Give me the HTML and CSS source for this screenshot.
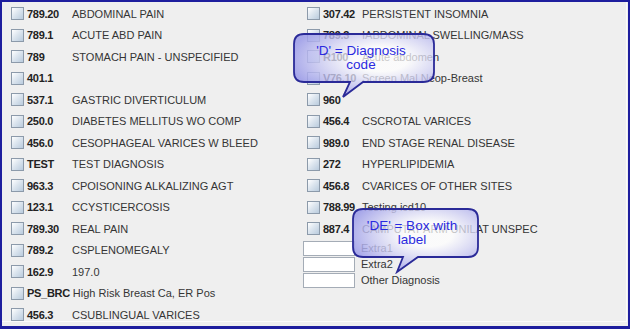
FILE: index.html
```html
<!DOCTYPE html>
<html lang="en">
<head>
    <meta charset="UTF-8" />
    <title>Diagnosis</title>
    <link rel="stylesheet" href="styles.css">
</head>
<body>
<div class="frame">
    <div class="panel">
        <div class="col col-left">
            <div class="row"><span class="cb"></span><span class="code">789.20</span><span class="desc">ABDOMINAL PAIN</span></div>
            <div class="row"><span class="cb"></span><span class="code">789.1</span><span class="desc">ACUTE ABD PAIN</span></div>
            <div class="row"><span class="cb"></span><span class="code">789</span><span class="desc">STOMACH PAIN - UNSPECIFIED</span></div>
            <div class="row"><span class="cb"></span><span class="code">401.1</span><span class="desc"></span></div>
            <div class="row"><span class="cb"></span><span class="code">537.1</span><span class="desc">GASTRIC DIVERTICULUM</span></div>
            <div class="row"><span class="cb"></span><span class="code">250.0</span><span class="desc">DIABETES MELLITUS WO COMP</span></div>
            <div class="row"><span class="cb"></span><span class="code">456.0</span><span class="desc">CESOPHAGEAL VARICES W BLEED</span></div>
            <div class="row"><span class="cb"></span><span class="code">TEST</span><span class="desc">TEST DIAGNOSIS</span></div>
            <div class="row"><span class="cb"></span><span class="code">963.3</span><span class="desc">CPOISONING ALKALIZING AGT</span></div>
            <div class="row"><span class="cb"></span><span class="code">123.1</span><span class="desc">CCYSTICERCOSIS</span></div>
            <div class="row"><span class="cb"></span><span class="code">789.30</span><span class="desc">REAL PAIN</span></div>
            <div class="row"><span class="cb"></span><span class="code">789.2</span><span class="desc">CSPLENOMEGALY</span></div>
            <div class="row"><span class="cb"></span><span class="code">162.9</span><span class="desc">197.0</span></div>
            <div class="row"><span class="cb"></span><span class="code">PS_BRC</span><span class="desc">High Risk Breast Ca, ER Pos</span></div>
            <div class="row"><span class="cb"></span><span class="code">456.3</span><span class="desc">CSUBLINGUAL VARICES</span></div>
        </div>
        <div class="col col-right">
            <div class="row"><span class="cb"></span><span class="code">307.42</span><span class="desc">PERSISTENT INSOMNIA</span></div>
            <div class="row"><span class="cb"></span><span class="code">789.3</span><span class="desc">IABDOMINAL SWELLING/MASS</span></div>
            <div class="row"><span class="cb"></span><span class="code">R100</span><span class="desc">Acute abdomen</span></div>
            <div class="row"><span class="cb"></span><span class="code">V76.10</span><span class="desc">Screen Mal Neop-Breast</span></div>
            <div class="row"><span class="cb"></span><span class="code">960</span><span class="desc"></span></div>
            <div class="row"><span class="cb"></span><span class="code">456.4</span><span class="desc">CSCROTAL VARICES</span></div>
            <div class="row"><span class="cb"></span><span class="code">989.0</span><span class="desc">END STAGE RENAL DISEASE</span></div>
            <div class="row"><span class="cb"></span><span class="code">272</span><span class="desc">HYPERLIPIDEMIA</span></div>
            <div class="row"><span class="cb"></span><span class="code">456.8</span><span class="desc">CVARICES OF OTHER SITES</span></div>
            <div class="row"><span class="cb"></span><span class="code">788.99</span><span class="desc">Testing icd10</span></div>
            <div class="row"><span class="cb"></span><span class="code">887.4</span><span class="desc">CAMPUTAT ARM UNILAT UNSPEC</span></div>
            <div class="extras">
                <div class="extra"><span class="box"></span><span class="desc">Extra1</span></div>
                <div class="extra"><span class="box"></span><span class="desc">Extra2</span></div>
                <div class="extra"><span class="box"></span><span class="desc">Other Diagnosis</span></div>
            </div>
        </div>

        <!-- callout: diagnosis code -->
        <div class="balloon balloon-d">
            <svg width="144" height="66" viewBox="0 0 144 66">
                <defs>
                    <radialGradient id="fillD" cx="62%" cy="40%" r="65%">
                        <stop offset="0.3" stop-color="#ffffff" stop-opacity="0.72"/>
                        <stop offset="1" stop-color="#9a9ae8" stop-opacity="0.85"/>
                    </radialGradient>
                </defs>
                <path d="M11 1 H130 Q141 1 141 11 V39 Q141 49 130 49 H70 L50 64 L57 49 H11 Q1 49 1 39 V11 Q1 1 11 1 Z"
                      fill="url(#fillD)" stroke="#2a2a98" stroke-width="1.8"/>
            </svg>
            <div class="balloon-text">'D' = Diagnosis<br>code</div>
        </div>

        <!-- callout: box with label -->
        <div class="balloon balloon-de">
            <svg width="128" height="66" viewBox="0 0 128 66">
                <defs>
                    <radialGradient id="fillDE" cx="60%" cy="40%" r="65%">
                        <stop offset="0.3" stop-color="#ffffff" stop-opacity="0.72"/>
                        <stop offset="1" stop-color="#9a9ae8" stop-opacity="0.85"/>
                    </radialGradient>
                </defs>
                <path d="M11 1 H116 Q126 1 126 11 V39 Q126 49 116 49 H66 L45 64 L51 49 H11 Q1 49 1 39 V11 Q1 1 11 1 Z"
                      fill="url(#fillDE)" stroke="#2a2a98" stroke-width="1.8"/>
            </svg>
            <div class="balloon-text">'DE' = Box with<br>label</div>
        </div>
    </div>
</div>
</body>
</html>
```

FILE: styles.css
```css
body {
    margin: 0;
    background-color: #efefef;
    font-family: "Liberation Sans", Arial, sans-serif;
    font-size: 11px;
    color: #353535;
}
.frame {
    width: 630px;
    height: 329px;
    box-sizing: border-box;
    border: 2px solid #1e1e9e;
    border-bottom-width: 3px;
    padding: 0 1px 4px 0;
    background-color: #efefef;
}
.panel {
    position: relative;
    height: 100%;
    box-sizing: border-box;
    border-right: 1px solid #fbfbfb;
    border-bottom: 1px solid #fbfbfb;
    display: grid;
    grid-template-columns: 296px 1fr;
    padding-top: 1px;
}
.col {
    padding-left: 9px;
}
.row {
    display: flex;
    align-items: center;
    height: 21.5px;
    white-space: nowrap;
}
/* checkbox look */
.cb {
    width: 13px;
    height: 13px;
    box-sizing: border-box;
    border: 1px solid #8c9aaa;
    background: linear-gradient(135deg, #ffffff 0%, #dde6ef 45%, #b9cbdd 100%);
    margin-right: 3px;
    flex: none;
}
.code {
    font-weight: bold;
    color: #222;
    letter-spacing: -0.3px;
    min-width: 42px;
    padding-right: 3px;
    flex: none;
}
.col-right .code {
    min-width: 36px;
}
.extras {
    margin-left: -4px;
    padding-top: 0.5px;
}
.extra {
    display: flex;
    align-items: center;
    height: 16px;
}
.box {
    width: 52px;
    height: 15px;
    box-sizing: border-box;
    background-color: #fff;
    border: 1px solid #a4acb6;
    margin-right: 6px;
}
/* callouts */
.balloon {
    position: absolute;
}
.balloon svg {
    display: block;
}
.balloon-d {
    left: 291px;
    top: 31px;
}
.balloon-de {
    left: 350px;
    top: 206px;
}
.balloon-text {
    position: absolute;
    top: 11px;
    left: 0;
    width: 136px;
    text-align: center;
    font-size: 13.5px;
    line-height: 14px;
    color: #2a2ae0;
}
.balloon-de .balloon-text {
    width: 120px;
}
```
